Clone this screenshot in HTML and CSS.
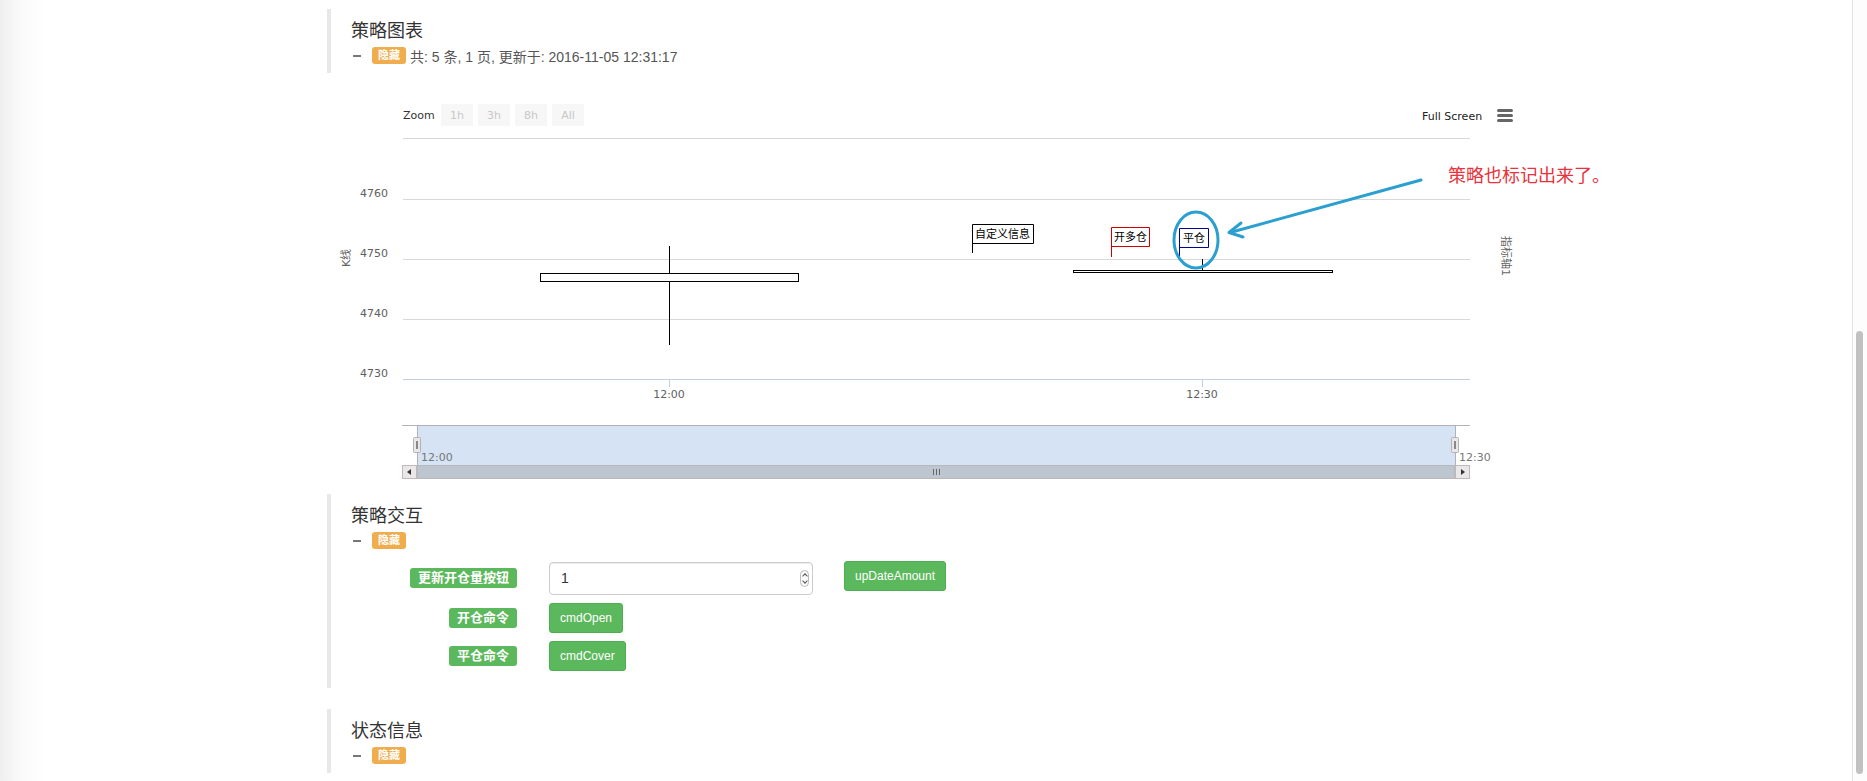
FILE: index.html
```html
<!DOCTYPE html>
<html lang="zh-CN">
<head>
<meta charset="utf-8">
<title>策略图表</title>
<link rel="stylesheet" href="styles.css">
</head>
<body>
<div class="page">
  <section class="panel panel-first">
    <h3 class="panel-title">策略图表</h3>
    <div class="panel-meta">
      <span class="minus"></span>
      <span class="badge-hide">隐藏</span>
      <span class="meta-text">共: 5 条, 1 页, 更新于: 2016-11-05 12:31:17</span>
    </div>
  </section>

  <div class="chart">
    <svg class="chart-svg" width="1200" height="421" viewBox="0 0 1200 421" xmlns="http://www.w3.org/2000/svg">
      <!-- range selector -->
      <text class="c-txt c-dark" x="76" y="46">Zoom</text>
      <rect x="114" y="31" width="32" height="22" fill="#f7f7f7"/>
      <rect x="151" y="31" width="32" height="22" fill="#f7f7f7"/>
      <rect x="188" y="31" width="32" height="22" fill="#f7f7f7"/>
      <rect x="225" y="31" width="32" height="22" fill="#f7f7f7"/>
      <text class="c-txt c-off" x="130" y="46" text-anchor="middle">1h</text>
      <text class="c-txt c-off" x="167" y="46" text-anchor="middle">3h</text>
      <text class="c-txt c-off" x="204" y="46" text-anchor="middle">8h</text>
      <text class="c-txt c-off" x="241" y="46" text-anchor="middle">All</text>

      <!-- full screen + menu -->
      <text class="c-txt c-black" x="1095" y="47">Full Screen</text>
      <rect x="1170" y="36" width="16" height="3" rx="1.5" fill="#666"/>
      <rect x="1170" y="41" width="16" height="3" rx="1.5" fill="#666"/>
      <rect x="1170" y="46" width="16" height="3" rx="1.5" fill="#666"/>

      <!-- grid -->
      <g stroke="#d8d8d8" stroke-width="1">
        <line x1="76" y1="65.5" x2="1143" y2="65.5"/>
        <line x1="76" y1="126.5" x2="1143" y2="126.5"/>
        <line x1="76" y1="186.5" x2="1143" y2="186.5"/>
        <line x1="76" y1="246.5" x2="1143" y2="246.5"/>
      </g>
      <line x1="76" y1="306.5" x2="1143" y2="306.5" stroke="#c0d0e0"/>
      <line x1="342.5" y1="306" x2="342.5" y2="314" stroke="#c0d0e0"/>
      <line x1="875.5" y1="306" x2="875.5" y2="314" stroke="#c0d0e0"/>

      <!-- y labels -->
      <text class="c-txt c-axis" x="61" y="124" text-anchor="end">4760</text>
      <text class="c-txt c-axis" x="61" y="184" text-anchor="end">4750</text>
      <text class="c-txt c-axis" x="61" y="244" text-anchor="end">4740</text>
      <text class="c-txt c-axis" x="61" y="304" text-anchor="end">4730</text>
      <text class="c-txt c-title" transform="translate(23 185) rotate(-90)" text-anchor="middle">K线</text>
      <text class="c-txt c-title" transform="translate(1175 183) rotate(90)" text-anchor="middle">指标轴1</text>

      <!-- x labels -->
      <text class="c-txt c-axis" x="342" y="325" text-anchor="middle">12:00</text>
      <text class="c-txt c-axis" x="875" y="325" text-anchor="middle">12:30</text>

      <!-- candles -->
      <line x1="342.5" y1="173" x2="342.5" y2="200.5" stroke="#000"/>
      <line x1="342.5" y1="208.5" x2="342.5" y2="272" stroke="#000"/>
      <rect x="213.5" y="200.5" width="258" height="8" fill="#fff" stroke="#000"/>
      <line x1="875.5" y1="186" x2="875.5" y2="197.5" stroke="#000"/>
      <rect x="746.5" y="197.5" width="259" height="2" fill="#fff" stroke="#000"/>

      <!-- flags -->
      <path d="M645.5 180 V151.5 H706.5 V170.5 H645.5" fill="#fff" stroke="#000"/>
      <text class="c-flag" x="648" y="165">自定义信息</text>
      <path d="M784.5 184 V154.5 H822.5 V173.5 H784.5" fill="#fff" stroke="#cc0000"/>
      <text class="c-flag" x="787" y="168">开多仓</text>
      <path d="M852.5 186 V155.5 H881.5 V174.5 H852.5" fill="#fff" stroke="#000099"/>
      <text class="c-flag" x="856" y="169">平仓</text>

      <!-- annotation -->
      <ellipse cx="869" cy="167" rx="22" ry="28" fill="none" stroke="#2b9fcf" stroke-width="3"/>
      <line x1="1094" y1="107" x2="905" y2="159" stroke="#2b9fcf" stroke-width="3" stroke-linecap="round"/>
      <polyline points="914,150 902,159.5 916,164" fill="none" stroke="#2b9fcf" stroke-width="3" stroke-linecap="round" stroke-linejoin="round"/>
      <text class="c-note" x="1121" y="109">策略也标记出来了。</text>

      <!-- navigator -->
      <rect x="90" y="353" width="1038" height="39" fill="#d5e3f4"/>
      <line x1="75" y1="352.5" x2="1143" y2="352.5" stroke="#b2b1b6"/>
      <line x1="90.5" y1="352" x2="90.5" y2="392" stroke="#b2b1b6"/>
      <line x1="1128.5" y1="352" x2="1128.5" y2="392" stroke="#b2b1b6"/>
      <rect x="86.5" y="364.5" width="7" height="15" rx="1" fill="#ebe7e8" stroke="#b2b1b6"/>
      <line x1="89.5" y1="368" x2="89.5" y2="376" stroke="#888"/>
      <line x1="90.5" y1="368" x2="90.5" y2="376" stroke="#888"/>
      <rect x="1124.5" y="364.5" width="7" height="15" rx="1" fill="#ebe7e8" stroke="#b2b1b6"/>
      <line x1="1127.5" y1="368" x2="1127.5" y2="376" stroke="#888"/>
      <line x1="1128.5" y1="368" x2="1128.5" y2="376" stroke="#888"/>
      <text class="c-txt c-nav" x="94" y="388">12:00</text>
      <text class="c-txt c-nav" x="1132" y="388">12:30</text>

      <!-- scrollbar -->
      <rect x="75" y="392" width="1068" height="14" fill="#eeeeee"/>
      <rect x="90.5" y="392.5" width="1037" height="13" fill="#bcc5d0" stroke="#b8b8b8"/>
      <line x1="606.5" y1="396" x2="606.5" y2="402" stroke="#666"/>
      <line x1="609.5" y1="396" x2="609.5" y2="402" stroke="#666"/>
      <line x1="612.5" y1="396" x2="612.5" y2="402" stroke="#666"/>
      <rect x="75.5" y="392.5" width="14" height="13" fill="#ebe7e8" stroke="#bbb"/>
      <path d="M84 396 L80 399 L84 402 Z" fill="#333"/>
      <rect x="1128.5" y="392.5" width="14" height="13" fill="#ebe7e8" stroke="#bbb"/>
      <path d="M1134 396 L1138 399 L1134 402 Z" fill="#333"/>
    </svg>
  </div>

  <section class="panel panel-form">
    <h3 class="panel-title">策略交互</h3>
    <div class="panel-meta">
      <span class="minus"></span>
      <span class="badge-hide">隐藏</span>
    </div>
    <div class="form">
      <div class="form-row row-input">
        <div class="form-label"><span class="label-ok">更新开仓量按钮</span></div>
        <div class="number-field">
          <input class="number-input" type="text" value="1">
          <span class="spinner"><span class="spin-up"></span><span class="spin-down"></span></span>
        </div>
        <button class="btn-ok btn-after">upDateAmount</button>
      </div>
      <div class="form-row">
        <div class="form-label"><span class="label-ok">开仓命令</span></div>
        <button class="btn-ok">cmdOpen</button>
      </div>
      <div class="form-row">
        <div class="form-label"><span class="label-ok">平仓命令</span></div>
        <button class="btn-ok">cmdCover</button>
      </div>
    </div>
  </section>

  <section class="panel panel-last">
    <h3 class="panel-title">状态信息</h3>
    <div class="panel-meta">
      <span class="minus"></span>
      <span class="badge-hide">隐藏</span>
    </div>
  </section>
</div>

<div class="page-scroll"><div class="page-thumb"></div></div>
</body>
</html>
```

FILE: styles.css
```css
html, body {
  margin: 0;
  padding: 0;
}
body {
  height: 781px;
  overflow: hidden;
  background: linear-gradient(to right, #efefef 0, #fafafa 20px, #ffffff 45px);
  font-family: "Liberation Sans", "Noto Sans CJK SC", sans-serif;
  color: #333;
  position: relative;
}
.page {
  margin-left: 327px;
  width: 1200px;
  padding-top: 9px;
}
.panel {
  border-left: 4px solid #e8e8e8;
  padding: 12px 0 7px 20px;
}
.panel-title {
  margin: 0;
  font-size: 18px;
  line-height: 20px;
  font-weight: normal;
  color: #333;
}
.panel-meta {
  margin-top: 4px;
  height: 21px;
  display: flex;
  align-items: center;
  font-size: 14px;
  color: #555;
}
.minus {
  display: inline-block;
  width: 8px;
  height: 2px;
  background: #777;
  margin-left: 2px;
  margin-right: 11px;
}
.badge-hide {
  display: inline-block;
  height: 17px;
  line-height: 17px;
  padding: 0 6px;
  background: #f0ad4e;
  color: #fff;
  font-size: 11px;
  font-weight: bold;
  border-radius: 3px;
  margin-right: 4px;
}
.meta-text {
  white-space: nowrap;
}
.chart {
  height: 421px;
}
.chart-svg {
  display: block;
  overflow: visible;
}
.c-txt {
  font-family: "DejaVu Sans", "Noto Sans CJK SC", sans-serif;
  font-size: 11px;
}
.c-dark { fill: #333; }
.c-black { fill: #222; }
.c-off { fill: #c8c8c8; }
.c-axis { fill: #606060; }
.c-title { fill: #666; }
.c-nav { fill: #777; }
.c-flag {
  font-family: "Noto Sans CJK SC", sans-serif;
  font-size: 11px;
  fill: #000;
}
.c-note {
  font-family: "Noto Sans CJK SC", sans-serif;
  font-size: 18px;
  fill: #e8323c;
}
.panel-form {
  padding-bottom: 17px;
}
.panel-last {
  margin-top: 21px;
}
.form {
  margin-top: 10px;
}
.form-row {
  display: flex;
  align-items: center;
  height: 30px;
  margin-bottom: 8px;
}
.form-row:last-child {
  margin-bottom: 0;
}
.row-input {
  height: 34px;
}
.form-label {
  width: 166px;
  display: flex;
  justify-content: flex-end;
  margin-right: 32px;
}
.label-ok {
  display: inline-block;
  background: #5cb85c;
  color: #fff;
  font-size: 13px;
  font-weight: bold;
  line-height: 13px;
  padding: 3px 8px 4px;
  border-radius: 3px;
  white-space: nowrap;
}
.number-field {
  position: relative;
  width: 264px;
  height: 33px;
}
.number-input {
  box-sizing: border-box;
  width: 264px;
  height: 33px;
  border: 1px solid #ccc;
  border-radius: 4px;
  box-shadow: inset 0 1px 1px rgba(0,0,0,0.075);
  padding: 0 11px;
  font-family: "Liberation Sans", sans-serif;
  font-size: 14px;
  color: #333;
  outline: none;
  background: #fff;
}
.spinner {
  position: absolute;
  right: 4px;
  top: 8px;
  width: 9px;
  height: 17px;
  border: 1px solid #bbb;
  border-radius: 5px;
  background: #fafafa;
  box-sizing: border-box;
}
.spin-up, .spin-down {
  position: absolute;
  left: 2px;
  width: 3px;
  height: 3px;
  border-left: 1px solid #555;
  border-top: 1px solid #555;
}
.spin-up {
  top: 3px;
  transform: rotate(45deg);
}
.spin-down {
  bottom: 3px;
  transform: rotate(225deg);
}
.btn-ok {
  box-sizing: border-box;
  height: 30px;
  padding: 0 10px;
  background: #5cb85c;
  border: 1px solid #4cae4c;
  border-radius: 3px;
  color: #fff;
  font-family: "Liberation Sans", sans-serif;
  font-size: 12px;
  line-height: 28px;
  cursor: pointer;
}
.btn-after {
  margin-left: 31px;
  align-self: flex-start;
}
.page-scroll {
  position: absolute;
  right: 0;
  top: 0;
  width: 14px;
  height: 781px;
  border-left: 1px solid #e4e4e4;
  background: #fdfdfd;
}
.page-thumb {
  position: absolute;
  left: 3px;
  top: 331px;
  width: 7px;
  height: 443px;
  border-radius: 4px;
  background: #c1c1c1;
}
```
